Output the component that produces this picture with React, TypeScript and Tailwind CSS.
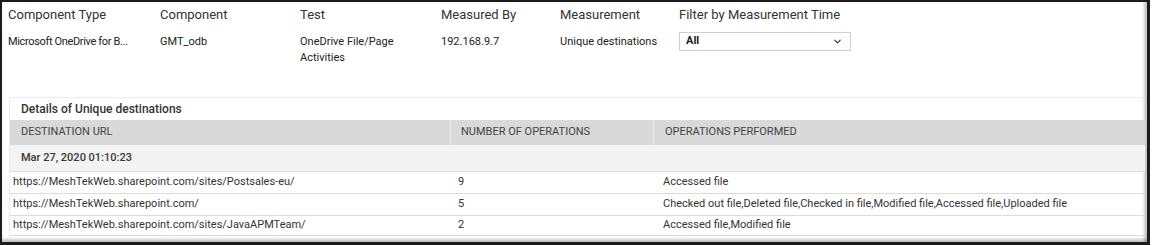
import { ChevronDown } from "lucide-react";

const FIELDS = [
  { label: "Component Type", value: ["Microsoft OneDrive for B..."], w: "w-[152px]", tight: true },
  { label: "Component", value: ["GMT_odb"], w: "w-[140px]" },
  { label: "Test", value: ["OneDrive File/Page", "Activities"], w: "w-[141px]" },
  { label: "Measured By", value: ["192.168.9.7"], w: "w-[119px]" },
  { label: "Measurement", value: ["Unique destinations"], w: "w-[119px]" },
];

const ROWS = [
  {
    url: "https://MeshTekWeb.sharepoint.com/sites/Postsales-eu/",
    count: "9",
    ops: "Accessed file",
  },
  {
    url: "https://MeshTekWeb.sharepoint.com/",
    count: "5",
    ops: "Checked out file,Deleted file,Checked in file,Modified file,Accessed file,Uploaded file",
  },
  {
    url: "https://MeshTekWeb.sharepoint.com/sites/JavaAPMTeam/",
    count: "2",
    ops: "Accessed file,Modified file",
  },
];

export default function App() {
  return (
    <div
      className="w-[1154px] h-[245px] bg-white text-[#333]"
      style={{ fontFamily: "Roboto, 'Liberation Sans', sans-serif" }}
    >
      <div className="w-[1150px] h-[245px] flex flex-col border-t-2 border-l-2 border-r-[3px] border-b-[3px] border-[#1c1c1c] shadow-[inset_-4px_0_3px_-1px_rgba(0,0,0,0.22),inset_0_-4px_3px_-1px_rgba(0,0,0,0.22)]">
        {/* Summary fields */}
        <div className="flex pl-[6px] pt-[5px]">
          {FIELDS.map((f) => (
            <div key={f.label} className={`${f.w} flex flex-col`}>
              <div className="text-[13px] leading-[16px]">{f.label}</div>
              <div className="mt-[10px] pt-[1px] text-[11px] leading-[15.5px] text-[#222]">
                {f.value.map((v) => (
                  <div key={v} className={f.tight ? "tracking-[-0.35px] whitespace-nowrap" : ""}>
                    {v}
                  </div>
                ))}
              </div>
            </div>
          ))}
          <div className="flex flex-col">
            <div className="text-[13px] leading-[16px]">Filter by Measurement Time</div>
            <div className="mt-[9px] w-[172px] h-[19px] border border-[#cfcfcf] flex items-center justify-between pl-[6px] pr-[7px]">
              <span className="text-[11px] font-bold text-[#222]">All</span>
              <ChevronDown size={11} strokeWidth={2.6} className="text-[#333]" />
            </div>
          </div>
        </div>

        {/* Details panel */}
        <div className="mt-[32px] ml-[7px] mr-[2px] border-t border-l border-[#ebebeb] flex flex-col">
          <div className="h-[22px] flex items-center pl-[11px] text-[12px] font-medium text-[#333]">
            Details of Unique destinations
          </div>
          <div className="flex h-[25px] bg-[#d9d9d9] text-[11px] text-[#444] uppercase items-center">
            <div className="w-[440px] pl-[11px]">Destination URL</div>
            <div className="w-[203px] h-full flex items-center pl-[10px] border-l border-[#ececec]">
              Number of Operations
            </div>
            <div className="flex-1 h-full flex items-center pl-[11px] border-l border-[#ececec]">
              Operations Performed
            </div>
          </div>
          <div className="h-[27px] flex items-center bg-[#f3f3f3] border-b border-[#dcdcdc] pl-[11px] text-[11px] font-medium text-[#383838]">
            Mar 27, 2020 01:10:23
          </div>
          {ROWS.map((r, i) => (
            <div
              key={r.url}
              className={`flex items-center text-[11px] text-[#333] border-b border-[#dcdcdc] ${
                i === 2 ? "h-[20px]" : "h-[22px]"
              }`}
            >
              <div className="w-[440px] pl-[3px]">{r.url}</div>
              <div className="w-[203px] pl-[8px]">{r.count}</div>
              <div className="flex-1 pl-[10px] whitespace-nowrap">{r.ops}</div>
            </div>
          ))}
        </div>
      </div>
    </div>
  );
}
